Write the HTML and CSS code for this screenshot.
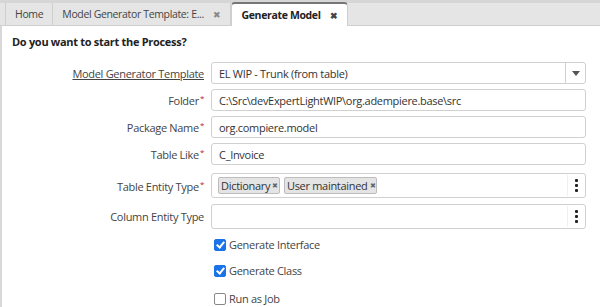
FILE: index.html
```html
<!DOCTYPE html>
<html>
<head>
    <title>Generate Model</title>
    <link rel="stylesheet" href="styles.css">
</head>
<body>
    <div class="tabbar">
        <div class="tab">Home</div>
        <div class="tab">Model Generator Template: E... <span class="close">&#10006;</span></div>
        <div class="tab active">Generate Model <span class="close">&#10006;</span></div>
    </div>

    <div class="panel">
        <h1>Do you want to start the Process?</h1>

        <div class="form">
            <label class="link">Model Generator Template</label>
            <div class="field combo">
                <span class="value">EL WIP - Trunk (from table)</span>
                <span class="combo-btn"><svg width="8" height="5" viewBox="0 0 8 5"><path d="M0 0h8L4 5z" fill="#555"/></svg></span>
            </div>

            <label>Folder<sup>*</sup></label>
            <div class="field"><span class="value">C:\Src\devExpertLightWIP\org.adempiere.base\src</span></div>

            <label>Package Name<sup>*</sup></label>
            <div class="field"><span class="value">org.compiere.model</span></div>

            <label>Table Like<sup>*</sup></label>
            <div class="field"><span class="value">C_Invoice</span></div>

            <label class="multi-label">Table Entity Type<sup>*</sup></label>
            <div class="field multi">
                <span class="chip">Dictionary<span class="x">&#10006;</span></span>
                <span class="chip">User maintained<span class="x">&#10006;</span></span>
                <span class="dots"><i></i><i></i><i></i></span>
            </div>

            <label>Column Entity Type</label>
            <div class="field multi">
                <span class="dots"><i></i><i></i><i></i></span>
            </div>

            <span></span>
            <div class="check"><span class="box on"></span>Generate Interface</div>

            <span></span>
            <div class="check"><span class="box on"></span>Generate Class</div>

            <span></span>
            <div class="check last"><span class="box"></span>Run as Job</div>
        </div>
    </div>
</body>
</html>
```

FILE: styles.css
```css
body { margin: 0; font-family: "Open Sans", Arial, sans-serif; font-size: 11px; letter-spacing: -0.3px; color: #333; background: white; overflow: hidden; height: 307px; }

.tabbar { display: flex; height: 22px; padding-left: 5px; background: #e5e5e5; border-top: 3px solid #d6d6d6; border-bottom: 1px solid #cfcfcf; }
.tab { display: flex; align-items: center; gap: 9px; padding: 0 9px; border-right: 1px solid #cfcfcf; color: #444; font-size: 10.5px; letter-spacing: -0.35px; }
.tab:first-child { border-left: 1px solid #cfcfcf; }
.tab .close { font-size: 9px; color: #888; }
.tab.active { background: white; font-weight: bold; color: #222; margin-top: -1px; margin-bottom: -1px; border: 1px solid #cfcfcf; border-top: 2px solid #777; border-bottom: none; border-radius: 4px 4px 0 0; padding: 0 10px 0 10px; }
.tab.active .close { color: #444; }

.panel { box-sizing: border-box; border-left: 2px solid #d8d8d8; padding: 8px 0 0 10px; height: 281px; }
h1 { font-size: 11px; font-weight: bold; color: #222; margin: 0 0 13px 0; }

.form { display: grid; grid-template-columns: 192px 375px; column-gap: 7px; row-gap: 5px; align-items: center; }
.form label { text-align: right; color: #444; }
.form label.link { text-decoration: underline; }
.form sup { color: #b22; font-size: 8px; vertical-align: 4px; margin-left: 1px; }

.field { height: 20px; border: 1px solid #d0d0d0; border-radius: 3px; display: flex; align-items: center; padding-left: 7px; background: white; }
.value { flex: 1; white-space: nowrap; }
.combo { padding-right: 0; }
.combo-btn { width: 19px; height: 20px; border-left: 1px solid #d0d0d0; display: flex; align-items: center; justify-content: center; }

.field.multi { height: 23px; padding-left: 6px; gap: 4px; margin: 1px 0 0; }
.multi-label, .field.multi:nth-of-type(5) { margin-top: 3px; }
.chip { display: flex; align-items: center; gap: 1px; background: #e4e4e4; border: 1px solid #bdbdbd; border-radius: 2px; padding: 0 1px 0 2px; height: 15px; line-height: 15px; color: #333; }
.chip .x { font-size: 7px; color: #666; margin-left: 1px; }
.dots { margin-left: auto; width: 17px; height: 21px; display: flex; flex-direction: column; align-items: center; justify-content: center; gap: 2px; border-left: 1px solid #f0f0f0; }
.dots i { width: 3px; height: 3px; background: #222; border-radius: 1px; }

.check { display: flex; align-items: center; height: 21px; color: #444; }
.check.last { margin-top: 2px; }
.box { width: 10px; height: 10px; border: 1px solid #888; border-radius: 2px; margin: 0 3px 0 3px; background: white; position: relative; }
.box.on { background: #1a73e8; border-color: #1a73e8; }
.box.on::after { content: ""; position: absolute; left: 3px; top: 0px; width: 3px; height: 6px; border: solid white; border-width: 0 2px 2px 0; transform: rotate(40deg); }
```
